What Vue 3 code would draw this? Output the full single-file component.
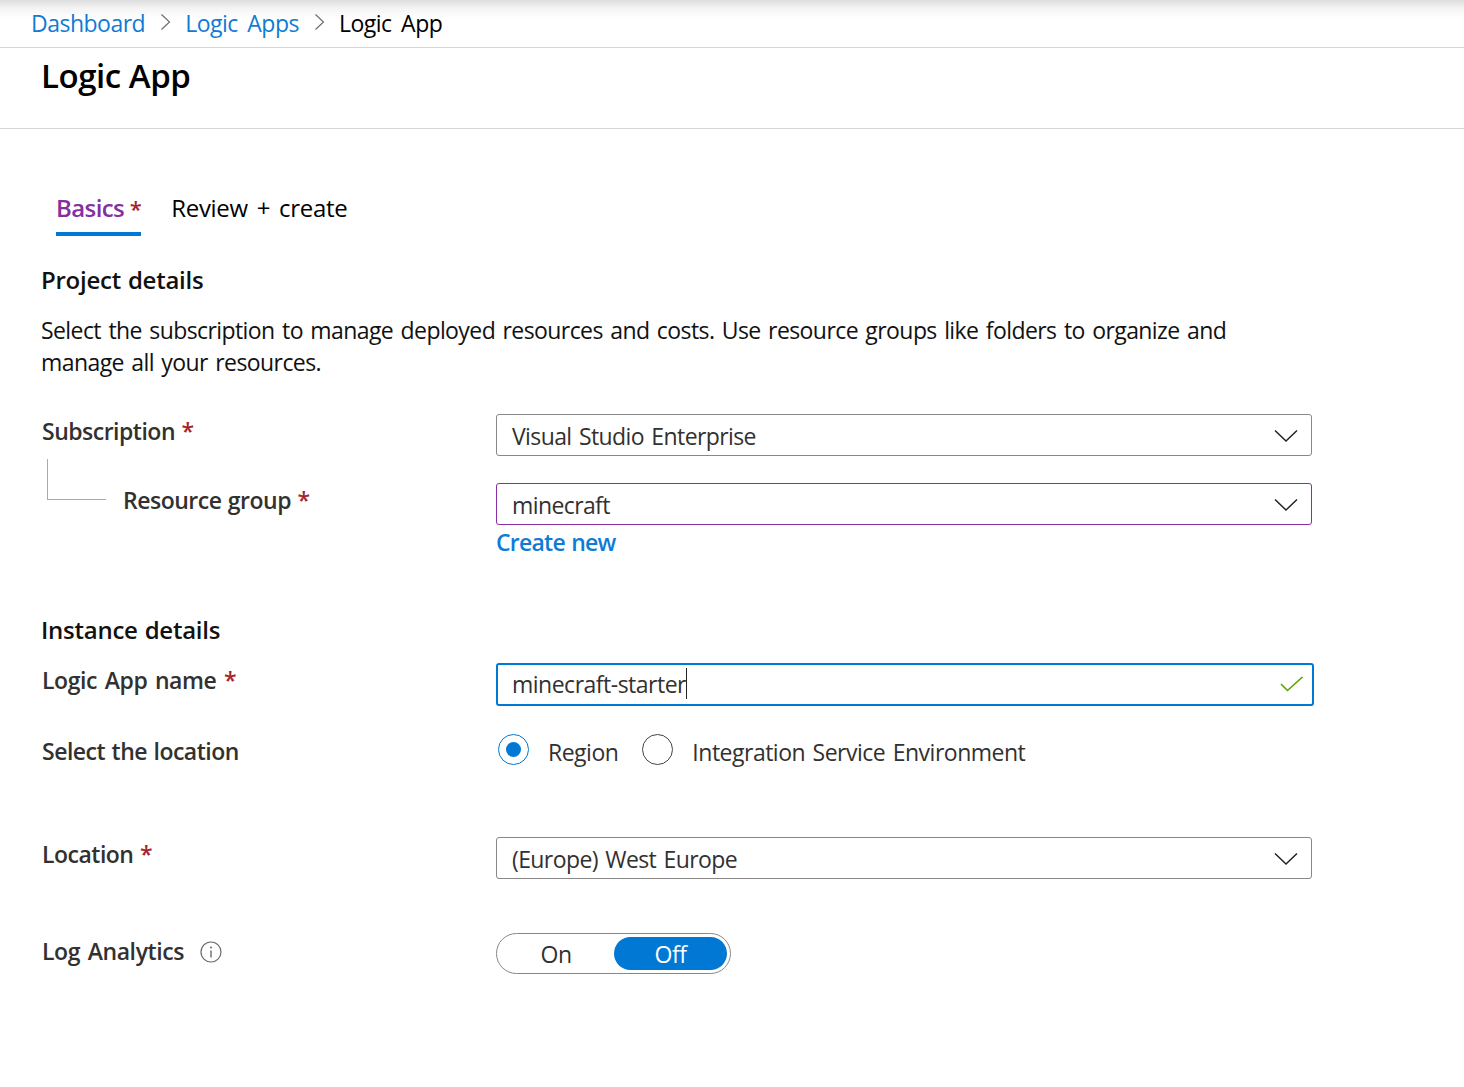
<script setup>
const crumbs = ['Dashboard', 'Logic Apps']
</script>

<template>
  <div class="page">
    <nav class="crumbs">
      <template v-for="c in crumbs" :key="c">
        <a class="link">{{ c }}</a>
        <svg class="sep" width="12" height="18" viewBox="0 0 12 18"><path d="M1.5 1.5 9.5 9l-8 7.5" fill="none" stroke="#6f6f6f" stroke-width="1.2"/></svg>
      </template>
      <span>Logic App</span>
    </nav>
    <header class="title"><h1>Logic App</h1></header>
    <main class="body">
      <div class="tabs">
        <div class="tab active">Basics <span class="req">*</span></div>
        <div class="tab">Review + create</div>
      </div>
      <h2 class="h-project">Project details</h2>
      <p class="desc">Select the subscription to manage deployed resources and costs. Use resource groups like folders to organize and manage all your resources.</p>

      <div class="row r-sub">
        <label>Subscription <span class="req">*</span></label>
        <div class="field select">Visual Studio Enterprise
          <svg class="chev" width="24" height="14" viewBox="0 0 24 14"><path d="M1 1.5 12 12 23 1.5" fill="none" stroke="#222" stroke-width="1.5"/></svg>
        </div>
      </div>
      <div class="row r-rg">
        <label class="indent"><i class="tree"></i>Resource group <span class="req">*</span></label>
        <div class="col">
          <div class="field select purple">minecraft
            <svg class="chev" width="24" height="14" viewBox="0 0 24 14"><path d="M1 1.5 12 12 23 1.5" fill="none" stroke="#222" stroke-width="1.5"/></svg>
          </div>
          <a class="create">Create new</a>
        </div>
      </div>

      <h2 class="h-instance">Instance details</h2>
      <div class="row r-name">
        <label>Logic App name <span class="req">*</span></label>
        <div class="field focus"><span class="caret-text">minecraft-starter</span>
          <svg class="check" width="25" height="16" viewBox="0 0 25 16"><path d="M2 8 8.5 14.5 23.5 1" fill="none" stroke="#57a300" stroke-width="1.6"/></svg>
        </div>
      </div>
      <div class="row r-loc">
        <label>Select the location</label>
        <div class="radios">
          <span class="radio on"></span><span class="r-label first">Region</span>
          <span class="radio"></span><span class="r-label">Integration Service Environment</span>
        </div>
      </div>
      <div class="row r-location">
        <label>Location <span class="req">*</span></label>
        <div class="field select">(Europe) West Europe
          <svg class="chev" width="24" height="14" viewBox="0 0 24 14"><path d="M1 1.5 12 12 23 1.5" fill="none" stroke="#222" stroke-width="1.5"/></svg>
        </div>
      </div>
      <div class="row r-log">
        <label>Log Analytics
          <svg class="info" width="22" height="22" viewBox="0 0 22 22"><circle cx="11" cy="11" r="10" fill="none" stroke="#6b6b6b" stroke-width="1.2"/><path d="M11 9.5v7" stroke="#6b6b6b" stroke-width="1.4"/><circle cx="11" cy="6.6" r="1" fill="#6b6b6b"/></svg>
        </label>
        <div class="toggle"><span class="t-off">On</span><span class="t-on">Off</span></div>
      </div>
    </main>
  </div>
</template>

<style>
html, body { margin: 0; background: #fff; }
</style>

<style scoped>
.page { width: 1464px; height: 1087px; overflow: hidden; background: #fff; font-family: "Open Sans", "Noto Sans", sans-serif; color: #111; font-size: 23px; }
.crumbs { height: 47px; box-sizing: border-box; padding: 0 0 2px 31px; box-shadow: 0 1px 0 #d6d6d6; display: flex; align-items: center; background: linear-gradient(#dedede 0, #f3f3f3 8px, #fff 18px); font-size: 23px; letter-spacing: -.5px; word-spacing: 4px; color: #000; margin-bottom: 1px; }
.link { color: #0f7bd6; }
.sep { margin: 0 13px 2px 15px; }
.title { height: 80px; border-bottom: 1px solid #d6d6d6; padding-left: 41px; }
h1 { margin: 0; padding-top: 8px; font-size: 33px; font-weight: 600; line-height: 40px; letter-spacing: -.45px; color: #000; }
.body { padding: 0 42px; }
.tabs { display: flex; margin: 46px 0 0 14px; }
.tab { font-size: 24px; line-height: 34px; height: 61px; box-sizing: border-box; padding-top: 16px; letter-spacing: -.3px; word-spacing: 3px; white-space: nowrap; color: #000; }
.tab + .tab { margin-left: 30px; }
.tab.active { color: #85309f; border-bottom: 4px solid #0078d4; font-weight: 600; letter-spacing: -.6px; word-spacing: 0; }
.req { color: #a4262c; font-weight: 600; }
.tab .req { font-size: 22px; }
h2 { margin: 0; font-size: 24px; font-weight: 600; line-height: 32px; letter-spacing: -.25px; word-spacing: 1px; color: #111; }
.h-project { margin-top: 28px; margin-left: -1px; }
.desc { margin: 18px 0 0 -1px; width: 1200px; line-height: 32px; font-size: 23px; letter-spacing: -.58px; word-spacing: 2px; color: #111; }
.row { display: grid; grid-template-columns: 454px 816px; align-items: start; }
label { font-size: 23px; font-weight: 600; letter-spacing: -.5px; word-spacing: 1px; color: #323130; line-height: 32px; white-space: nowrap; position: relative; display: block; }
.field { box-sizing: border-box; height: 42px; border: 1px solid #8a8886; border-radius: 3px; padding-left: 15px; line-height: 42px; font-size: 23px; letter-spacing: -.6px; word-spacing: 2px; color: #323130; position: relative; white-space: nowrap; }
.purple { border-color: #8a2da5; }
.chev { position: absolute; right: 13px; top: 14px; }
.r-sub { margin-top: 36px; }
.r-sub label { padding-top: 1px; }
.r-rg { margin-top: 27px; }
.indent { padding-left: 81px; padding-top: 1px; }
.tree { position: absolute; left: 5px; top: -24px; width: 58px; height: 40px; border-left: 1px solid #aaa; border-bottom: 1px solid #aaa; }
.create { display: block; margin-top: 1px; line-height: 32px; color: #0f7bd6; font-size: 23px; font-weight: 600; letter-spacing: -.75px; word-spacing: 1px; }
.h-instance { margin-top: 56px; margin-left: -1px; }
.r-name { margin-top: 17px; grid-template-columns: 454px 818px; }
.r-name label { padding-top: 1px; letter-spacing: -.4px; word-spacing: 2px; }
.focus { height: 43px; border: 2px solid #0078d4; padding-left: 14px; line-height: 36px; letter-spacing: -.5px; }
.caret-text { border-right: 1px solid #222; display: inline-block; height: 31px; line-height: 33px; vertical-align: middle; margin-top: -4px; }
.check { position: absolute; right: 8px; top: 11px; }
.r-loc { margin-top: 30px; }
.r-loc label { margin-top: -1px; }
.radios { display: flex; align-items: center; font-size: 23px; letter-spacing: -.5px; word-spacing: 2px; color: #323130; padding-left: 2px; height: 32px; }
.radio { box-sizing: border-box; width: 31px; height: 31px; border-radius: 50%; border: 1px solid #444; display: block; margin-top: -5px; position: relative; }
.radio.on { border-color: #0078d4; }
.radio.on::after { content: ""; position: absolute; left: 7px; top: 7px; width: 15px; height: 15px; border-radius: 50%; background: #0078d4; }
.r-label { margin: 0 22px 0 19px; }
.r-label.first { margin-right: 24px; }
.r-location { margin-top: 69px; }
.r-location label { padding-top: 1px; }
.r-log { margin-top: 54px; }
.r-log label { padding-top: 2px; letter-spacing: -.4px; word-spacing: 2px; }
.info { position: absolute; left: 158px; top: 8px; }
.toggle { box-sizing: border-box; width: 235px; height: 41px; border: 1px solid #8a8886; border-radius: 21px; display: flex; align-items: center; padding: 3px; font-size: 23px; letter-spacing: -.5px; color: #323130; }
.t-off { width: 112px; text-align: center; }
.t-on { width: 113px; height: 33px; margin-left: 2px; line-height: 35px; text-align: center; border-radius: 17px; background: #0078d4; color: #fff; }
</style>
